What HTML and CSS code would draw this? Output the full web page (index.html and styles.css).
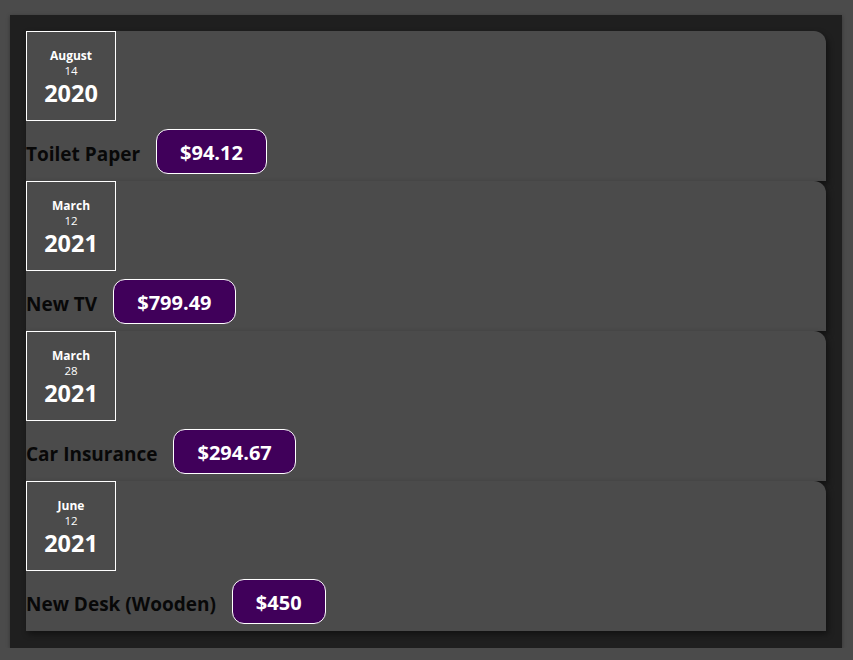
FILE: index.html
```html
<!DOCTYPE html>
<html>
<head>
<meta charset="utf-8">
<link rel="stylesheet" href="styles.css">
</head>
<body>
<div class="expenses">
  <div class="item">
    <div class="date">
      <div class="month">August</div>
      <div class="day">14</div>
      <div class="year">2020</div>
    </div>
    <div class="desc">
      <h2>Toilet Paper</h2>
      <div class="price">$94.12</div>
    </div>
  </div>
  <div class="item">
    <div class="date">
      <div class="month">March</div>
      <div class="day">12</div>
      <div class="year">2021</div>
    </div>
    <div class="desc">
      <h2>New TV</h2>
      <div class="price">$799.49</div>
    </div>
  </div>
  <div class="item">
    <div class="date">
      <div class="month">March</div>
      <div class="day">28</div>
      <div class="year">2021</div>
    </div>
    <div class="desc">
      <h2>Car Insurance</h2>
      <div class="price">$294.67</div>
    </div>
  </div>
  <div class="item">
    <div class="date">
      <div class="month">June</div>
      <div class="day">12</div>
      <div class="year">2021</div>
    </div>
    <div class="desc">
      <h2>New Desk (Wooden)</h2>
      <div class="price">$450</div>
    </div>
  </div>
</div>
</body>
</html>
```

FILE: styles.css
```css
html, body {
  margin: 0;
  padding: 0;
  background: #4b4b4b;
  font-family: "Open Sans", "Noto Sans", sans-serif;
}

.expenses {
  margin: 15px 11px 0 10px;
  padding: 16px 16px 17px;
  background: #1f1f1f;
  box-shadow: 0 1px 4px rgba(0, 0, 0, 0.3);
}

.item {
  display: flex;
  flex-direction: column;
  align-items: flex-start;
  background: #4b4b4b;
  border-top-right-radius: 12px;
  box-shadow: 2px 3px 6px rgba(0, 0, 0, 0.45);
  padding-bottom: 7px;
}

.date {
  box-sizing: border-box;
  width: 90px;
  height: 90px;
  padding-top: 3px;
  border: 1px solid #fff;
  color: #fff;
  display: flex;
  flex-direction: column;
  align-items: center;
  justify-content: center;
  margin-bottom: 8px;
}

.month {
  font-size: 12px;
  font-weight: 700;
  line-height: 15px;
}

.day {
  font-size: 11.5px;
  line-height: 15px;
}

.year {
  font-size: 23.5px;
  font-weight: 700;
  line-height: 30px;
}

.desc {
  display: flex;
  align-items: center;
  gap: 16px;
}

.desc h2 {
  margin: 0;
  padding-top: 4px;
  font-size: 19px;
  font-weight: 700;
  color: #080808;
}

.price {
  box-sizing: border-box;
  height: 45px;
  display: flex;
  align-items: center;
  padding: 2px 23px 0;
  background: #40005a;
  border: 1px solid #fff;
  border-radius: 12px;
  color: #fff;
  font-size: 20px;
  font-weight: 700;
}
```
